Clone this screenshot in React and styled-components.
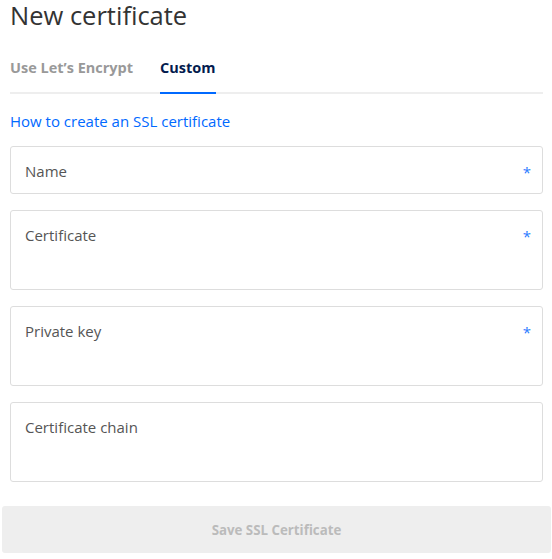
import React from 'react';
import styled, { createGlobalStyle } from 'styled-components';

const GlobalStyle = createGlobalStyle`
  html, body {
    margin: 0;
    padding: 0;
    background: #fff;
  }
  body {
    font-family: "Open Sans", "Lato", sans-serif;
  }
`

const Page = styled.div`
  width: 549px;
  padding: 0 1px 0 2px;
`

const Content = styled.div`
  padding: 0 8px 0 8px;
`

const Title = styled.h1`
  margin: 0;
  padding-top: 1px;
  font-size: 25.5px;
  font-weight: 400;
  line-height: 29px;
  color: #333;
`

const Tabs = styled.div`
  display: flex;
  gap: 27px;
  margin-top: 28px;
  border-bottom: 2px solid #eee;
`

const Tab = styled.button`
  font-family: inherit;
  font-size: 14.5px;
  font-weight: 700;
  line-height: 20px;
  background: none;
  border: none;
  padding: 0 0 14px;
  margin-bottom: -2px;
  cursor: pointer;
  color: ${p => (p.$active ? '#031b4e' : '#999')};
  border-bottom: 2px solid ${p => (p.$active ? '#0069ff' : 'transparent')};
`

const HelpLink = styled.a`
  display: block;
  margin-top: 17px;
  font-size: 15px;
  line-height: 20px;
  color: #0069ff;
  text-decoration: none;
`

const Fields = styled.div`
  display: flex;
  flex-direction: column;
  gap: 16px;
  margin-top: 15px;
`

const Field = styled.label`
  display: flex;
  justify-content: space-between;
  align-items: flex-start;
  height: ${p => (p.$tall ? '80px' : '48px')};
  box-sizing: border-box;
  border: 1px solid #ddd;
  border-radius: 3px;
  padding: 14px 11px 0 14px;
  font-size: 15px;
  line-height: 20px;
  color: #555;
`

const Required = styled.span`
  color: #2a7bff;
  font-size: 15px;
  font-weight: 400;
  margin-top: 1px;
`

const SaveButton = styled.button`
  display: block;
  width: 100%;
  height: 47px;
  margin-top: 24px;
  border: none;
  border-radius: 3px;
  background: #eee;
  color: #bbb;
  font-family: inherit;
  font-size: 13.3px;
  font-weight: 700;
  cursor: not-allowed;
`

const fields = [
  { label: 'Name', required: true },
  { label: 'Certificate', required: true, tall: true },
  { label: 'Private key', required: true, tall: true },
  { label: 'Certificate chain', tall: true },
];

export default function App() {
  return (
    <Page>
      <GlobalStyle />
      <Content>
        <Title>New certificate</Title>
        <Tabs>
          <Tab>Use Let’s Encrypt</Tab>
          <Tab $active>Custom</Tab>
        </Tabs>
        <HelpLink href="#">How to create an SSL certificate</HelpLink>
        <Fields>
          {fields.map(f => (
            <Field key={f.label} $tall={f.tall}>
              <span>{f.label}</span>
              {f.required && <Required>*</Required>}
            </Field>
          ))}
        </Fields>
      </Content>
      <SaveButton disabled>Save SSL Certificate</SaveButton>
    </Page>
  );
}
